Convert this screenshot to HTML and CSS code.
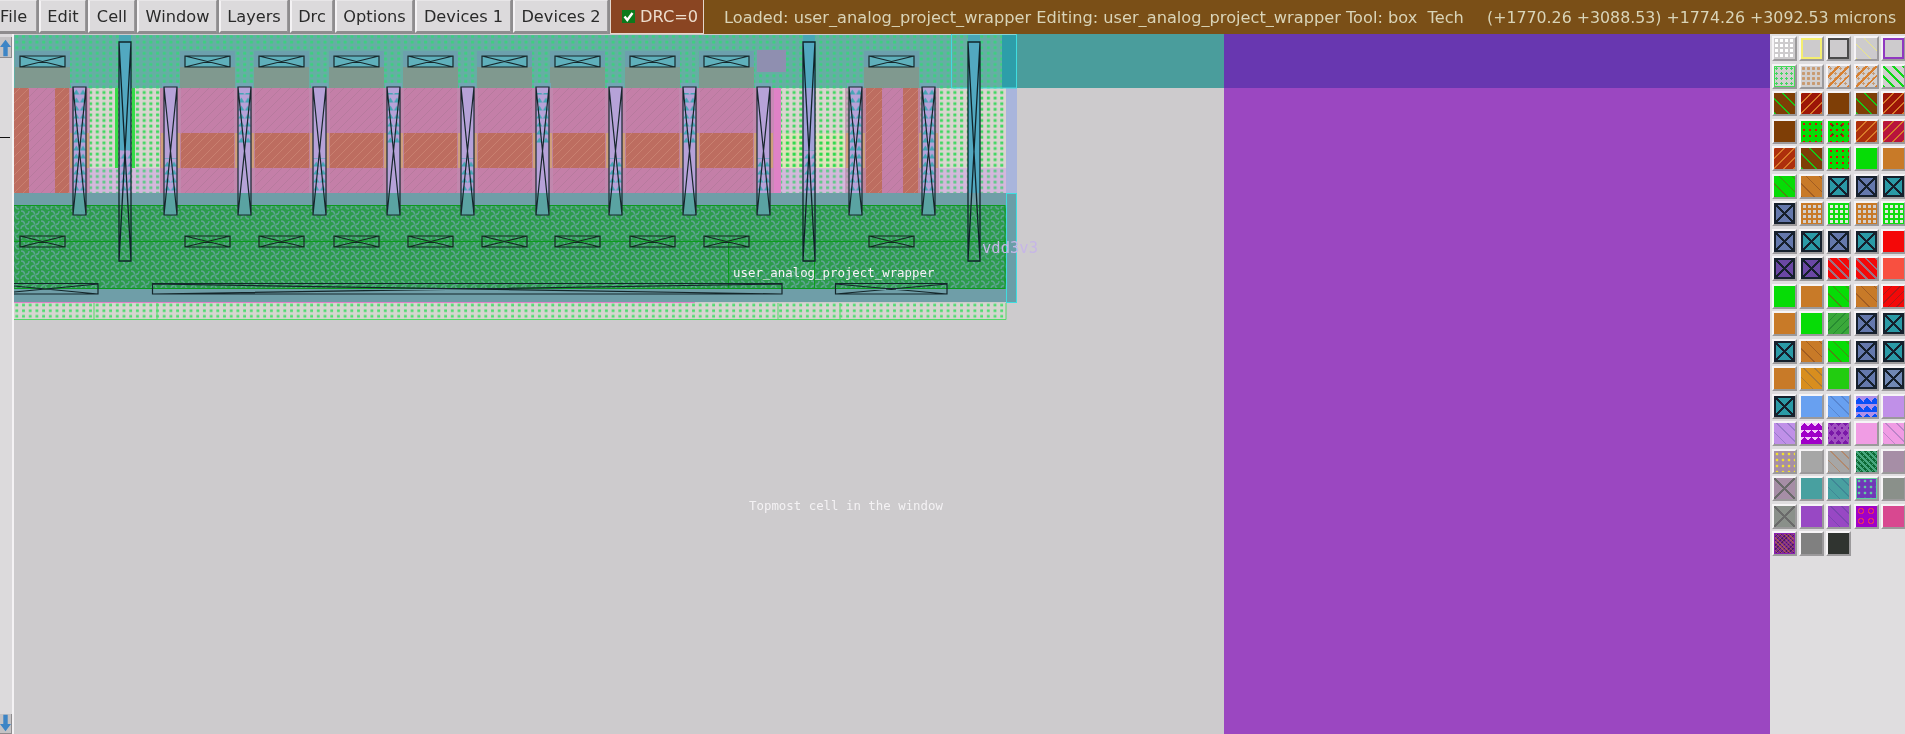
FILE: index.html
```html
<!DOCTYPE html>
<html lang="en">
<head>
<meta charset="utf-8">
<title>Magic layout</title>
<link rel="stylesheet" href="styles.css">
</head>
<body>
<header class="topbar">
  <nav class="menu">
    <span class="btn btn-file">File</span>
    <span class="btn w47">Edit</span>
    <span class="btn w46">Cell</span>
    <span class="btn w80">Window</span>
    <span class="btn w68">Layers</span>
    <span class="btn w43">Drc</span>
    <span class="btn w77">Options</span>
    <span class="btn w96">Devices 1</span>
    <span class="btn w94">Devices 2</span>
  </nav>
  <div class="drc">
    <svg class="check" viewBox="0 0 13 13"><rect width="13" height="13" fill="#0c7a1c"/><path d="M2.5 6.5 5.3 10 10.5 3" fill="none" stroke="#fff" stroke-width="2.4"/></svg>
    <span>DRC=0</span>
  </div>
  <div class="status">
    <span class="status-left">Loaded: user_analog_project_wrapper Editing: user_analog_project_wrapper Tool: box&nbsp;&nbsp;Tech</span>
    <span class="status-right">(+1770.26 +3088.53) +1774.26 +3092.53 microns</span>
  </div>
</header>
<main class="body">
  <aside class="scroll">
    <span class="arrow">
      <svg viewBox="0 0 12 20" class="arrow-svg"><path d="M6 2 12 10H8.4V20H3.6V10H0Z" fill="#3d85c6"/></svg>
    </span>
    <span class="tick"></span>
    <span class="arrow arrow-down">
      <svg viewBox="0 0 12 20" class="arrow-svg"><path d="M6 18 12 10H8.4V0H3.6V10H0Z" fill="#3d85c6"/></svg>
    </span>
  </aside>
  <section class="canvas">
    <svg class="layout" viewBox="14 34 1756 700" xmlns="http://www.w3.org/2000/svg">
      <defs>
        <pattern id="dotTop" width="6.7" height="5.6" patternUnits="userSpaceOnUse"><rect width="6.7" height="5.6" fill="#66aea4"/><rect x="2" y="1.5" width="3" height="2.8" fill="#3dcf80"/></pattern>
        <pattern id="dotPale" width="6.7" height="5.6" patternUnits="userSpaceOnUse"><rect width="6.7" height="5.6" fill="#dad5d0"/><rect x="2" y="1.5" width="3" height="2.8" fill="#3fd860"/></pattern>
        <pattern id="dotPink" width="6.7" height="5.6" patternUnits="userSpaceOnUse"><rect width="6.7" height="5.6" fill="#d4b8dc"/><rect x="2" y="1.5" width="3" height="2.8" fill="#5fc888"/></pattern>
        <pattern id="dotLime" width="6.7" height="5.6" patternUnits="userSpaceOnUse"><rect width="6.7" height="5.6" fill="#e0e2bc"/><rect x="2" y="1.5" width="3.2" height="3" fill="#2ada48"/></pattern>
        <pattern id="dotBottom" width="6.7" height="5.6" patternUnits="userSpaceOnUse"><rect width="6.7" height="5.6" fill="#d6d5d0"/><rect x="2" y="1.4" width="2.8" height="2.6" fill="#4edc70"/></pattern>
        <pattern id="pink" width="9" height="9" patternUnits="userSpaceOnUse"><rect width="9" height="9" fill="#c47fa8"/><path d="M-1 10 10 -1" stroke="#b77a9e" stroke-width="1"/></pattern>
        <pattern id="red" width="9" height="9" patternUnits="userSpaceOnUse"><rect width="9" height="9" fill="#bd6d60"/><path d="M-1 10 10 -1" stroke="#c98070" stroke-width="1"/></pattern>
        <pattern id="dense" width="10" height="10" patternUnits="userSpaceOnUse"><rect width="10" height="10" fill="#2b9c4a"/><path d="M1 1C4 1 4.500 2.500 4.500 4.500M9 1C9 4 7.500 4.500 5.500 4.500M9 9C6 9 5.500 7.500 5.500 5.500M1 9C1 6 2.500 5.500 4.500 5.500" fill="none" stroke="#5ea492" stroke-width="1.4"/></pattern>
        <pattern id="tri" width="6.7" height="8" patternUnits="userSpaceOnUse"><rect width="6.7" height="8" fill="#b6a2d8"/><path d="M3.3 1.5 6.4 6.5H.2Z" fill="#45a5b5"/></pattern>

        <g id="contact">
          <rect x="-5" y="51" width="55" height="16" fill="#6ca0ad"/>
          <rect x="-5" y="67" width="55" height="21" fill="#80998f"/>
          <rect x="0" y="56" width="45" height="11" fill="#5fb0bb"/>
          <path d="M0 56H45V67H0ZM0 56 45 67M45 56 0 67" fill="none" stroke="#16282c" stroke-width="1.2"/>
          <path d="M0 236H45V247H0ZM0 236 45 247M45 236 0 247" fill="none" stroke="#142a22" stroke-width="1.2"/>
        </g>
        <g id="seam">
          <rect x="-4" y="88" width="21" height="105" fill="#c08cb0" opacity=".7"/>
          <rect x="-3" y="133" width="19" height="35" fill="#cf9f7c"/>
          <rect x="-2" y="83" width="17" height="5" fill="#72a6b4"/>
        </g>
        <g id="barX">
          <rect x="0" y="193" width="13" height="22" fill="#5aa3a2"/>
          <path d="M0 87H13V215H0ZM0 87 13 215M13 87 0 215" fill="none" stroke="#17262c" stroke-width="1.2"/>
        </g>
        <g id="barAll"><use href="#seam"/><rect y="87" width="13" height="106" fill="url(#tri)"/><use href="#barX"/></g>
        <g id="barUp"><use href="#seam"/><rect y="87" width="13" height="106" fill="#b6a2d8"/><rect y="93" width="13" height="52" fill="url(#tri)"/><use href="#barX"/></g>
        <g id="barLow"><use href="#seam"/><rect y="87" width="13" height="106" fill="#b6a2d8"/><rect y="158" width="13" height="33" fill="url(#tri)"/><use href="#barX"/></g>
        <g id="longX">
          <rect x="0" y="35" width="12" height="7" fill="#49a6b6"/>
          <path d="M0 42H12V261H0ZM0 42 12 261M12 42 0 261" fill="none" stroke="#10242a" stroke-width="1.3"/>
        </g>
      </defs>

      <rect x="14" y="34" width="1756" height="700" class="bg"/>
      <rect x="1017" y="34" width="207" height="54" class="teal"/>
      <rect x="1224" y="34" width="546" height="54" class="violet-dark"/>
      <rect x="1224" y="88" width="546" height="646" class="violet"/>

      <!-- wells and diffusion -->
      <rect x="14" y="35" width="992" height="53" fill="url(#dotTop)"/>
      <rect x="14" y="88" width="992" height="105" fill="url(#dotPale)"/>
      <rect x="14" y="168" width="992" height="25" fill="url(#dotPink)"/>
      <rect x="781" y="133" width="75" height="35" fill="url(#dotLime)"/>
      <rect x="14" y="88" width="74" height="105" fill="url(#pink)"/>
      <rect x="14" y="88" width="15" height="105" fill="url(#red)"/>
      <rect x="55" y="88" width="15" height="105" fill="url(#red)"/>
      <rect x="160" y="88" width="610" height="105" fill="url(#pink)"/>
      <rect x="768" y="88" width="13" height="105" class="pink-bright"/>
      <rect x="160" y="133" width="596" height="35" fill="url(#red)"/>
      <rect x="862" y="88" width="58" height="105" fill="url(#pink)"/>
      <rect x="863" y="88" width="19" height="105" fill="url(#red)"/>
      <rect x="903" y="88" width="17" height="105" fill="url(#red)"/>
      <rect x="115" y="88" width="3" height="80" class="lime"/>
      <rect x="132" y="88" width="3" height="80" class="lime"/>
      <rect x="1006" y="88" width="11" height="105" class="blue-strip"/>

      <rect x="14" y="193" width="992" height="13" class="slate"/>
      <rect x="14" y="205" width="992" height="84" fill="url(#dense)"/>
      <rect x="14" y="289" width="992" height="13" class="slate"/>
      <rect x="14" y="302" width="681" height="1" class="pink-bright"/>
      <rect x="14" y="303" width="992" height="17" fill="url(#dotBottom)"/>

      <path d="M14 205.5H1005V288.5H14M14 241.5H1005M728.5 241V288M814.5 241V288" class="line-green"/>
      <path d="M14 319.5H1006V303M94 303V320M157 303V320M778 303V320M840 303V320" class="line-lime"/>

      <!-- right edge boxes -->
      <rect x="1002" y="35" width="15" height="53" class="teal-deep"/>
      <rect x="1006.5" y="193.5" width="10" height="109" class="cyan-box"/>
      <rect x="951.5" y="34" width="65" height="54" class="cyan-line"/>
      <rect x="757" y="50" width="29" height="22" class="via-ghost"/>

      <!-- contacts -->
      <use href="#contact" x="20"/><use href="#contact" x="185"/><use href="#contact" x="259"/>
      <use href="#contact" x="334"/><use href="#contact" x="408"/><use href="#contact" x="482"/>
      <use href="#contact" x="555"/><use href="#contact" x="630"/><use href="#contact" x="704"/>
      <use href="#contact" x="869"/>

      <!-- short vertical straps -->
      <use href="#barAll" x="73"/><use href="#barLow" x="164"/><use href="#barUp" x="238"/>
      <use href="#barLow" x="313"/><use href="#barUp" x="387"/><use href="#barLow" x="461"/>
      <use href="#barUp" x="536"/><use href="#barLow" x="609"/><use href="#barUp" x="683"/>
      <use href="#barLow" x="757"/><use href="#barAll" x="849"/><use href="#barAll" x="922"/>

      <!-- long vertical straps -->
      <rect x="119" y="42" width="12" height="108" class="strap-blue"/>
      <rect x="119" y="150" width="12" height="43" fill="url(#tri)"/>
      <rect x="803" y="42" width="12" height="46" class="strap-blue"/>
      <rect x="803" y="88" width="12" height="62" class="strap-lav"/>
      <rect x="803" y="150" width="12" height="43" fill="url(#tri)"/>
      <rect x="968" y="42" width="12" height="151" class="strap-blue"/>
      <use href="#longX" x="119"/><use href="#longX" x="803"/><use href="#longX" x="968"/>

      <!-- horizontal straps -->
      <path d="M14 283.5H98V294H14M14 286 98 294M14 292 98 284" class="strap-h"/>
      <path d="M152.5 283.5H782V294H152.5ZM152.5 294 782 284M152.5 284 782 294" class="strap-h"/>
      <path d="M835.5 283.5H947V294H835.5ZM835.5 294 947 284M835.5 284 947 294" class="strap-h"/>

      <text x="733" y="277" class="label">user_analog_project_wrapper</text>
      <text x="982" y="253" class="label label-ghost">vdd3v3</text>
      <text x="749" y="510" class="label">Topmost cell in the window</text>
    </svg>
  </section>
  <aside class="palette">
    <span class="sw gray dots-white"></span><span class="sw gray box-yellow"></span><span class="sw gray box-dark"></span><span class="sw gray hatch-yellow"></span><span class="sw gray box-purple"></span>
    <span class="sw pale box-green dots-green"></span><span class="sw pale dots-tan"></span><span class="sw pale hatch-orange"></span><span class="sw pale hatch-orange"></span><span class="sw pale hatch-green"></span>
    <span class="sw brown back-green"></span><span class="sw darkred hatch-orange"></span><span class="sw brown"></span><span class="sw brown back-green"></span><span class="sw darkred hatch-orange"></span>
    <span class="sw brown"></span><span class="sw green dots-red"></span><span class="sw green dots-red dark-speck"></span><span class="sw rust hatch-orange"></span><span class="sw crimson hatch-orange"></span>
    <span class="sw rust hatch-orange"></span><span class="sw brown back-green"></span><span class="sw green dots-red"></span><span class="sw green"></span><span class="sw orange"></span>
    <span class="sw green ticks"></span><span class="sw orange ticks"></span><span class="sw teal-s cross"></span><span class="sw slate-s cross"></span><span class="sw teal-s cross"></span>
    <span class="sw slate-s cross"></span><span class="sw pale grid-orange"></span><span class="sw white grid-green"></span><span class="sw pale grid-orange"></span><span class="sw white grid-green dots-red-small"></span>
    <span class="sw slate-s cross dots-blue"></span><span class="sw teal-s cross dots-blue"></span><span class="sw slate-s cross dots-blue"></span><span class="sw teal-s cross dots-blue"></span><span class="sw red"></span>
    <span class="sw purple cross"></span><span class="sw purple cross"></span><span class="sw red back-slate"></span><span class="sw red back-slate"></span><span class="sw coral"></span>
    <span class="sw green"></span><span class="sw orange"></span><span class="sw green ticks"></span><span class="sw orange ticks"></span><span class="sw red hatch-dark"></span>
    <span class="sw orange"></span><span class="sw green"></span><span class="sw dullgreen hatch-soft"></span><span class="sw slate-s cross"></span><span class="sw teal-s cross"></span>
    <span class="sw teal-s cross dots-blue"></span><span class="sw orange ticks"></span><span class="sw green ticks"></span><span class="sw slate-s cross"></span><span class="sw teal-s cross"></span>
    <span class="sw orange"></span><span class="sw amber back-soft"></span><span class="sw grass"></span><span class="sw slate-s cross"></span><span class="sw slate-l cross"></span>
    <span class="sw teal-s cross"></span><span class="sw sky"></span><span class="sw sky back-soft"></span><span class="sw royal tri-lav"></span><span class="sw lav"></span>
    <span class="sw lav back-soft"></span><span class="sw magenta tri-white"></span><span class="sw deep diamonds"></span><span class="sw pinky"></span><span class="sw pinky back-soft"></span>
    <span class="sw mauve dots-yellow"></span><span class="sw midgray"></span><span class="sw midgray back-tan"></span><span class="sw forest swirl"></span><span class="sw mauve"></span>
    <span class="sw mauve cross-soft"></span><span class="sw teal-m"></span><span class="sw teal-m back-soft"></span><span class="sw violet-s dots-green-on"></span><span class="sw stone"></span>
    <span class="sw stone cross-soft"></span><span class="sw violet-m"></span><span class="sw violet-m back-soft"></span><span class="sw magenta diamonds-red"></span><span class="sw rose"></span>
    <span class="sw plum weave"></span><span class="sw iron"></span><span class="sw coal"></span>
  </aside>
</main>
</body>
</html>
```
FILE: styles.css
```css
* { box-sizing: border-box; }
html, body { margin: 0; height: 100%; overflow: hidden; }
html { background: #dfdddf; }
body {
  width: 1905px;
  height: 734px;
  background: #dfdddf;
  font-family: "DejaVu Sans", sans-serif;
  font-size: 16.2px;
  display: flex;
  flex-direction: column;
  filter: blur(.4px);
}

/* top bar */
.topbar { height: 34px; display: flex; flex: none; background: #8e8c8e; }
.menu { display: flex; gap: 2px; padding-right: 2px; }
.btn {
  height: 33px;
  display: flex;
  align-items: center;
  justify-content: center;
  background: #dcdadc;
  color: #2a2a2a;
  border-left: 2px solid #f4f2f4;
  border-top: 1px solid #e8e6e8;
  border-bottom: 2px solid #8e8c8e;
  border-right: 1px solid #9a989a;
}
.btn-file { width: 37px; border-left: 0; justify-content: flex-start; padding-left: 0; }
.w47 { width: 47px; }
.w46 { width: 47px; }
.w80 { width: 80px; }
.w68 { width: 69px; }
.w43 { width: 43px; }
.w77 { width: 78px; }
.w96 { width: 96px; }
.w94 { width: 95px; }
.drc {
  width: 94px;
  height: 34px;
  display: flex;
  align-items: center;
  gap: 5px;
  padding-left: 11px;
  background: #8a4522;
  color: #ecdccc;
  border-right: 1px solid #e4d6cc;
  border-left: 1px solid #e4d6cc;
  border-bottom: 1px solid #e4d6cc;
}
.check { width: 13px; height: 13px; flex: none; }
.status {
  flex: 1;
  min-width: 0;
  display: flex;
  align-items: center;
  padding-left: 20px;
  background: #7a4f17;
  color: #d9d4b8;
}
.status-left { width: 741px; flex: none; overflow: hidden; white-space: nowrap; }
.status-right { margin-left: 22px; white-space: nowrap; font-size: 15.8px; }

/* main */
.body { flex: 1; min-height: 0; display: flex; }
.scroll {
  width: 14px;
  flex: none;
  position: relative;
  background: #dcdadc;
  border-right: 2px solid #f4f2f4;
  display: flex;
  flex-direction: column;
  justify-content: space-between;
  padding-top: 3px;
}
.arrow {
  display: block;
  height: 21px;
  background: #c4c2c4;
  border-bottom: 1px solid #8e8c8e;
  border-right: 1px solid #8e8c8e;
}
.arrow-down { height: 20px; }
.arrow-svg { display: block; width: 11px; height: 20px; }
.tick {
  position: absolute;
  left: 0;
  top: 103px;
  width: 10px;
  height: 1px;
  background: #111;
}
.canvas { width: 1756px; flex: none; overflow: hidden; }
.layout { display: block; width: 1756px; height: 700px; }

.bg { fill: #cdcbcd; }
.teal { fill: #4a9d9c; }
.violet-dark { fill: #6837b0; }
.violet { fill: #9b47c1; }
.pink-bright { fill: #df82c6; }
.lime { fill: #38dc48; }
.blue-strip { fill: #a9b5dc; }
.slate { fill: #6f9ea8; }
.teal-deep { fill: #2d9ea9; }
.via-ghost { fill: #8f8fb0; }
.cyan-box { fill: #6a9ea8; stroke: #3fdde0; stroke-width: 1; }
.cyan-line { fill: none; stroke: #3fdde0; stroke-width: 1; }
.strap-blue { fill: #52a8c0; }
.strap-lav { fill: #a2a0d8; }
.line-green { fill: none; stroke: #0d9a20; stroke-width: 1; }
.line-lime { fill: none; stroke: #55d868; stroke-width: 1; }
.strap-h { fill: none; stroke: #14262a; stroke-width: 1.2; }
.label {
  font-family: "DejaVu Sans Mono", monospace;
  font-size: 12.4px;
  fill: #f4f2f4;
}
.label-ghost { fill: #c6b6e6; font-size: 15.5px; }

/* layer palette */
.palette {
  width: 135px;
  flex: none;
  display: grid;
  grid-template-columns: repeat(5, 25px);
  grid-auto-rows: 25px;
  column-gap: 2.2px;
  row-gap: 2.5px;
  padding: 2px 0 0 2px;
  align-content: start;
  background: #dfdddf;
}
.sw {
  display: block;
  border: 2px solid;
  border-color: #f6f4f6 #9b999b #9b999b #f6f4f6;
  background-clip: padding-box;
  background-origin: padding-box;
  box-shadow: none;
}

/* base colours */
.gray { background-color: #cdcbcd; }
.pale { background-color: #d2cfcf; }
.white { background-color: #e4e8e0; }
.brown { background-color: #7e3e06; }
.darkred { background-color: #9c1608; }
.green { background-color: #06dc06; }
.rust { background-color: #ad2f0c; }
.crimson { background-color: #b8143c; }
.orange { background-color: #c87a28; }
.teal-s { background-color: #2a9aa6; }
.slate-s { background-color: #6478ac; }
.slate-l { background-color: #7088b4; }
.purple { background-color: #6a48a4; }
.red { background-color: #f40808; }
.coral { background-color: #f85040; }
.dullgreen { background-color: #3aa83a; }
.amber { background-color: #d88e1e; }
.grass { background-color: #22cc10; }
.sky { background-color: #68a0f0; }
.royal { background-color: #0a50f8; }
.lav { background-color: #c090e8; }
.magenta { background-color: #a000c8; }
.deep { background-color: #7a18a8; }
.pinky { background-color: #f09ce4; }
.mauve { background-color: #a68ea6; }
.midgray { background-color: #a6a6a6; }
.forest { background-color: #0c6a34; }
.teal-m { background-color: #48a0a0; }
.violet-s { background-color: #7038b8; }
.stone { background-color: #8a908a; }
.violet-m { background-color: #9848c4; }
.rose { background-color: #d84890; }
.plum { background-color: #7a2a90; }
.iron { background-color: #808080; }
.coal { background-color: #303430; }

/* overlays */
.box-yellow { box-shadow: inset 0 0 0 2px #f4ee70; }
.box-dark { box-shadow: inset 0 0 0 2px #4a4a4a; }
.box-purple { box-shadow: inset 0 0 0 2px #9038c0; }
.box-green { box-shadow: inset 0 0 0 1px #48d858; }
.dots-white { background-image: radial-gradient(circle, #fff 0 1.6px, transparent 1.7px); background-size: 5px 5px; }
.dots-green { background-image: radial-gradient(circle, #40d860 0 1.2px, transparent 1.3px); background-size: 5px 5px; }
.dots-tan { background-image: radial-gradient(circle, #c89a70 0 1.4px, transparent 1.5px); background-size: 5px 5px; }
.dots-red { background-image: radial-gradient(circle, #e00808 0 1.3px, transparent 1.4px); background-size: 6px 6px; }
.dots-red-small { background-image: linear-gradient(#18d818 0 2px, transparent 2px), linear-gradient(90deg, #18d818 0 2px, transparent 2px), radial-gradient(circle, #c04020 0 1px, transparent 1.1px); background-size: 5px 5px; }
.dots-blue { background-image: linear-gradient(45deg, transparent 46%, #16202c 46% 54%, transparent 54%), linear-gradient(135deg, transparent 46%, #16202c 46% 54%, transparent 54%), radial-gradient(circle, #5aa0f0 0 1.2px, transparent 1.3px); background-size: 100% 100%, 100% 100%, 6px 6px; }
.dots-yellow { background-image: radial-gradient(circle, #f0e030 0 1.5px, transparent 1.6px); background-size: 6px 6px; }
.dots-green-on { background-image: radial-gradient(circle, #60d0a0 0 1.5px, transparent 1.6px); background-size: 6px 6px; box-shadow: inset 0 0 0 1px #60d0a0; }
.dark-speck { background-image: radial-gradient(circle, #e00808 0 1.3px, transparent 1.4px), radial-gradient(circle, #703010 0 1px, transparent 1.1px); background-size: 6px 6px, 9px 9px; }
.hatch-yellow { background-image: repeating-linear-gradient(45deg, #ece884 0 1.2px, transparent 1.2px 10px); }
.hatch-orange { background-image: repeating-linear-gradient(135deg, #d88030 0 1.6px, transparent 1.6px 7px), radial-gradient(circle, #c89a70 0 1px, transparent 1.1px); background-size: 100% 100%, 5px 5px; }
.darkred.hatch-orange, .rust.hatch-orange, .crimson.hatch-orange { background-image: repeating-linear-gradient(135deg, #d87a2a 0 1.4px, transparent 1.4px 7px); }
.hatch-green { background-image: repeating-linear-gradient(45deg, #10d818 0 2px, transparent 2px 7px); }
.back-green { background-image: repeating-linear-gradient(45deg, #18c818 0 1.6px, transparent 1.6px 10px); }
.back-slate { background-image: repeating-linear-gradient(45deg, #a07080 0 1.6px, transparent 1.6px 7px); }
.back-soft { background-image: repeating-linear-gradient(45deg, rgba(40, 60, 120, .25) 0 1px, transparent 1px 8px); }
.back-tan { background-image: repeating-linear-gradient(45deg, #b08a70 0 1px, transparent 1px 8px); }
.hatch-dark { background-image: repeating-linear-gradient(135deg, #b01818 0 1px, transparent 1px 6px); }
.hatch-soft { background-image: repeating-linear-gradient(135deg, rgba(20, 110, 40, .5) 0 1px, transparent 1px 6px); }
.ticks { background-image: repeating-linear-gradient(45deg, rgba(130, 70, 30, .55) 0 1px, transparent 1px 9px); }
.cross {
  background-image: linear-gradient(45deg, transparent 46%, #16202c 46% 54%, transparent 54%), linear-gradient(135deg, transparent 46%, #16202c 46% 54%, transparent 54%);
  box-shadow: inset 0 0 0 2px #16202c;
}
.cross.dots-blue { background-size: 100% 100%, 100% 100%, 6px 6px; }
.cross-soft {
  background-image: linear-gradient(45deg, transparent 47%, #6a6a6a 47% 53%, transparent 53%), linear-gradient(135deg, transparent 47%, #6a6a6a 47% 53%, transparent 53%);
}
.grid-orange { background-image: linear-gradient(#c87a28 0 2px, transparent 2px), linear-gradient(90deg, #c87a28 0 2px, transparent 2px); background-size: 5px 5px; }
.grid-green { background-image: linear-gradient(#10dc10 0 2px, transparent 2px), linear-gradient(90deg, #10dc10 0 2px, transparent 2px); background-size: 5px 5px; }
.tri-lav { background-image: linear-gradient(135deg, #b090e8 25%, transparent 25%), linear-gradient(45deg, transparent 60%, #b090e8 60%); background-size: 8px 8px; }
.tri-white { background-image: linear-gradient(135deg, #f4c8f8 25%, transparent 25%), linear-gradient(225deg, #f4c8f8 25%, transparent 25%); background-size: 7px 7px; }
.diamonds { background-image: linear-gradient(45deg, transparent 40%, #a050c0 40% 60%, transparent 60%), linear-gradient(135deg, transparent 40%, #a050c0 40% 60%, transparent 60%); background-size: 7px 10px; }
.diamonds-red { background-image: radial-gradient(circle, transparent 0 2px, #e03068 2.1px 3px, transparent 3.1px); background-size: 10px 10px; }
.swirl { background-image: linear-gradient(45deg, transparent 40%, #48a880 40% 60%, transparent 60%), linear-gradient(135deg, transparent 45%, #48a880 45% 55%, transparent 55%); background-size: 6px 6px; }
.weave { background-image: repeating-linear-gradient(45deg, rgba(220, 120, 60, .5) 0 1px, transparent 1px 3px), repeating-linear-gradient(135deg, rgba(30, 10, 60, .5) 0 1px, transparent 1px 3px); box-shadow: inset 0 0 0 1px #8a20b0; }
```
